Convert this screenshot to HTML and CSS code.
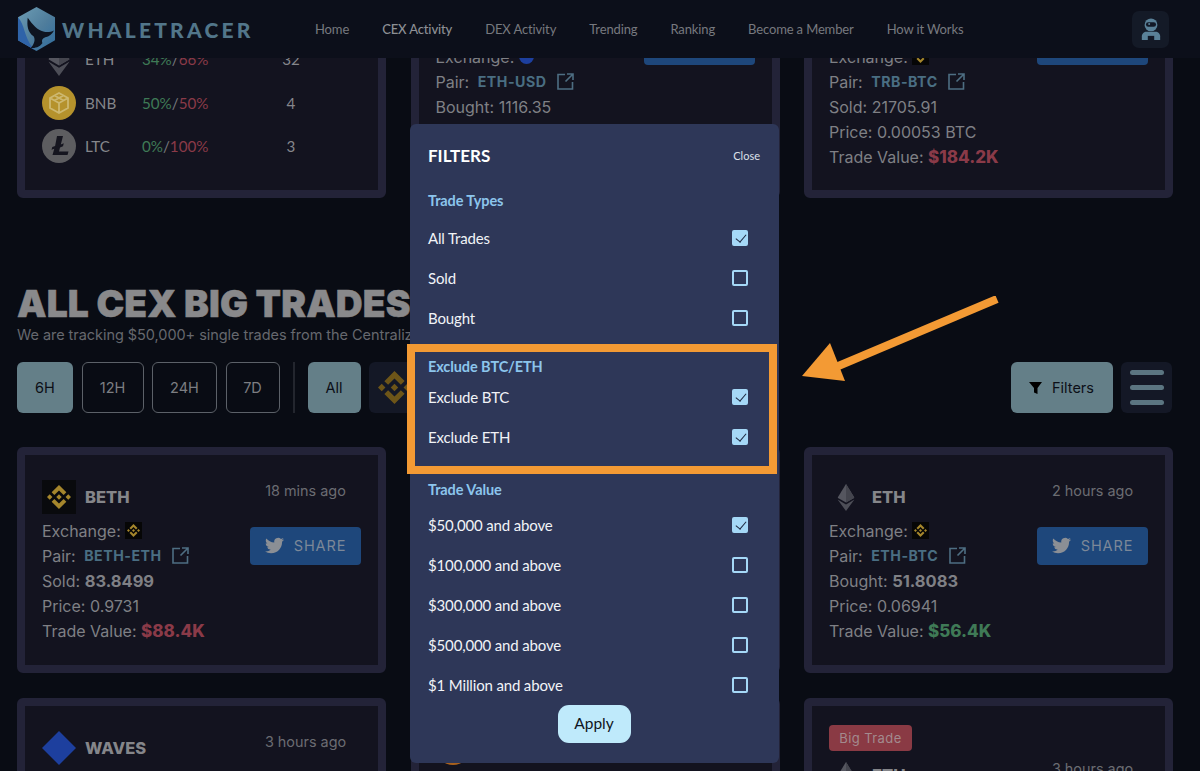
FILE: index.html
```html
<!DOCTYPE html>
<html>

<head>
  <meta name="viewport" content="width=device-width, initial-scale=1">
  <title>WhaleTracer</title>
  <link rel="stylesheet" href="styles.css">
</head>

<body>
  <svg class="defs" width="0" height="0">
    <symbol id="binance" viewBox="0 0 24 24">
      <path d="M16.624 13.9202l2.7175 2.7154-7.353 7.353-7.353-7.352 2.7175-2.7164 4.6355 4.6595 4.6356-4.6595zm4.6366-4.6366L24 12l-2.7154 2.7164L18.5682 12l2.6924-2.7164zm-9.272.001l2.7163 2.6914-2.7164 2.7174v-.001L9.2721 12l2.7164-2.7154zm-9.2722-.001L5.4088 12l-2.6914 2.6924L0 12l2.7164-2.7164zM11.9885.0115l7.353 7.329-2.7174 2.7154-4.6356-4.6356-4.6355 4.6595-2.7174-2.7154 7.353-7.353z" />
    </symbol>
    <symbol id="twitter" viewBox="0 0 24 24">
      <path d="M23.953 4.57a10 10 0 01-2.825.775 4.958 4.958 0 002.163-2.723c-.951.555-2.005.959-3.127 1.184a4.92 4.92 0 00-8.384 4.482C7.69 8.095 4.067 6.13 1.64 3.162a4.822 4.822 0 00-.666 2.475c0 1.71.87 3.213 2.188 4.096a4.904 4.904 0 01-2.228-.616v.06a4.923 4.923 0 003.946 4.827 4.996 4.996 0 01-2.212.085 4.936 4.936 0 004.604 3.417 9.867 9.867 0 01-6.102 2.105c-.39 0-.779-.023-1.17-.067a13.995 13.995 0 007.557 2.209c9.053 0 13.998-7.496 13.998-13.985 0-.21 0-.42-.015-.63A9.935 9.935 0 0024 4.59z" />
    </symbol>
    <symbol id="external" viewBox="0 0 17 17">
      <path d="M8 1.500H1V16h14.500V9M8.500 8.500L15.500 1.500M10 1h6v6" fill="none" stroke="currentColor" stroke-width="1.600" />
    </symbol>
    <symbol id="eth" viewBox="0 0 20 32">
      <path d="M10 0L0 16.200 10 22l10-5.800z" fill="#55565f" />
      <path d="M10 0v22l10-5.800z" fill="#44454e" />
      <path d="M0 18.400L10 32l10-13.600L10 24.300z" fill="#4d4e57" />
    </symbol>
  </svg>

  <div class="page">
    <header class="topbar">
      <a class="logo">
        <svg class="logo-mark" viewBox="0 0 40 46">
          <defs>
            <linearGradient id="hex" x1="0" y1="0" x2="1" y2="1">
              <stop offset="0" stop-color="#6d9db4" />
              <stop offset="0.55" stop-color="#4f7d9c" />
              <stop offset="1" stop-color="#2e6c9e" />
            </linearGradient>
          </defs>
          <path d="M20 0L39 10.500V34L20 45 1 34V10.500z" fill="url(#hex)" />
          <path d="M1 10.500C8 18 7 30 16 42L20 45 8 38 1 34z" fill="#2f63a8" />
          <path d="M11 11c-1 8 0 15 6 19 2 3 1 8-3 12 5 0 9-1 12-5-1-3 0-5 3-6 4-1 7-3 9-7-4 2-8 2-11 1-6-1-11-7-16-14z" fill="#0e1420" />
        </svg>
        <span class="logo-text">WHALETRACER</span>
      </a>
      <nav class="nav">
        <a>Home</a>
        <a class="active">CEX Activity</a>
        <a>DEX Activity</a>
        <a>Trending</a>
        <a>Ranking</a>
        <a>Become a Member</a>
        <a>How it Works</a>
      </nav>
      <button class="avatar">
        <svg viewBox="0 0 24 24" width="22" height="24">
          <circle cx="12" cy="7.500" r="7" fill="#5a8198" />
          <rect x="6.500" y="4.500" width="11" height="5" rx="2.500" fill="#121826" />
          <circle cx="10" cy="6.500" r="1.100" fill="#5a8198" />
          <path d="M2 24v-4c0-3 2.500-5 5-5h10c2.500 0 5 2 5 5v4z" fill="#5a8198" />
          <rect x="8.500" y="19.500" width="7" height="4.500" fill="#121826" />
        </svg>
      </button>
    </header>

    <main class="content">
      <div class="top-row">
        <section class="card">
          <div class="coin-row">
            <svg class="coin" viewBox="0 0 20 32">
              <use href="#eth" />
            </svg>
            <span class="coin-name">ETH</span>
            <span class="coin-pct"><span class="green">34%</span>/<span class="red">66%</span></span>
            <span class="coin-count">32</span>
          </div>
          <div class="coin-row">
            <svg class="coin" viewBox="0 0 34 34">
              <circle cx="17" cy="17" r="17" fill="#b5922c" />
              <path d="M17 7l9 5v10l-9 5-9-5V12zM8 12l9 5 9-5M17 17v10M12.500 9.500l9 5M21.500 9.500l-9 5" fill="none" stroke="#cdb870" stroke-width="1.800" />
            </svg>
            <span class="coin-name">BNB</span>
            <span class="coin-pct"><span class="green">50%</span>/<span class="red">50%</span></span>
            <span class="coin-count">4</span>
          </div>
          <div class="coin-row">
            <svg class="coin" viewBox="0 0 34 34">
              <circle cx="17" cy="17" r="17" fill="#5d5d60" />
              <path d="M15 7h6l-2.200 8.500 3-1.200-.8 3-3 1.200-1 4h9.500l-1 3.500H10.500l1.800-6.300-2.800 1 .8-2.800 2.800-1z" fill="#15151f" />
            </svg>
            <span class="coin-name">LTC</span>
            <span class="coin-pct"><span class="green">0%</span>/<span class="red">100%</span></span>
            <span class="coin-count">3</span>
          </div>
        </section>

        <section class="card trade trade-raised trade-covered">
          <div class="trade-info">
            <div class="line">Exchange: <span class="dot"></span></div>
            <div class="line">Pair: <a class="pair">ETH-USD</a> <svg class="ext"><use href="#external" /></svg></div>
            <div class="line">Bought: 1116.35</div>
          </div>
          <div class="trade-side">
            <button class="share"><svg class="bird"><use href="#twitter" /></svg>SHARE</button>
          </div>
        </section>

        <section class="card trade trade-raised">
          <div class="trade-info">
            <div class="line">Exchange: <span class="ex-icon"><svg><use href="#binance" /></svg></span></div>
            <div class="line">Pair: <a class="pair">TRB-BTC</a> <svg class="ext"><use href="#external" /></svg></div>
            <div class="line">Sold: 21705.91</div>
            <div class="line">Price: 0.00053 BTC</div>
            <div class="line">Trade Value: <b class="red value">$184.2K</b></div>
          </div>
          <div class="trade-side">
            <button class="share"><svg class="bird"><use href="#twitter" /></svg>SHARE</button>
          </div>
        </section>
      </div>

      <h1 class="title">ALL CEX BIG TRADES</h1>
      <p class="subtitle">We are tracking $50,000+ single trades from the Centralized Exchanges</p>

      <div class="toolbar">
        <button class="chip chip-on w-56">6H</button>
        <button class="chip w-62">12H</button>
        <button class="chip w-65">24H</button>
        <button class="chip w-54">7D</button>
        <span class="divider"></span>
        <button class="chip chip-on w-53">All</button>
        <button class="chip chip-dark"><svg class="chip-logo"><use href="#binance" /></svg></button>
        <button class="chip chip-on filters">
          <svg viewBox="0 0 14 14" width="14" height="14">
            <path d="M0 1h13L8.500 7v6L5 11.500V7z" />
          </svg>
          Filters
        </button>
        <button class="burger"><span></span><span></span><span></span></button>
      </div>

      <div class="card-grid">
        <section class="card">
          <div class="trade">
            <div class="trade-info">
              <div class="trade-head">
                <span class="head-icon"><svg><use href="#binance" /></svg></span>
                <span class="symbol">BETH</span>
              </div>
              <div class="line">Exchange: <span class="ex-icon"><svg><use href="#binance" /></svg></span></div>
              <div class="line">Pair: <a class="pair">BETH-ETH</a> <svg class="ext"><use href="#external" /></svg></div>
              <div class="line">Sold: <b>83.8499</b></div>
              <div class="line">Price: 0.9731</div>
              <div class="line">Trade Value: <b class="red value">$88.4K</b></div>
            </div>
            <div class="trade-side">
              <div class="time">18 mins ago</div>
              <button class="share"><svg class="bird"><use href="#twitter" /></svg>SHARE</button>
            </div>
          </div>
        </section>

        <section class="card"></section>

        <section class="card">
          <div class="trade">
            <div class="trade-info">
              <div class="trade-head">
                <svg class="head-coin" viewBox="0 0 20 32"><use href="#eth" /></svg>
                <span class="symbol">ETH</span>
              </div>
              <div class="line">Exchange: <span class="ex-icon"><svg><use href="#binance" /></svg></span></div>
              <div class="line">Pair: <a class="pair">ETH-BTC</a> <svg class="ext"><use href="#external" /></svg></div>
              <div class="line">Bought: <b>51.8083</b></div>
              <div class="line">Price: 0.06941</div>
              <div class="line">Trade Value: <b class="green value">$56.4K</b></div>
            </div>
            <div class="trade-side">
              <div class="time">2 hours ago</div>
              <button class="share"><svg class="bird"><use href="#twitter" /></svg>SHARE</button>
            </div>
          </div>
        </section>

        <section class="card">
          <div class="trade">
            <div class="trade-info">
              <div class="trade-head">
                <svg class="head-coin-full" viewBox="0 0 34 34">
                  <path d="M17 0l17 17-17 17L0 17z" fill="#1d3f9e" />
                </svg>
                <span class="symbol">WAVES</span>
              </div>
            </div>
            <div class="trade-side">
              <div class="time">3 hours ago</div>
            </div>
          </div>
        </section>

        <section class="card">
          <div class="trade">
            <div class="trade-info">
              <div class="trade-head">
                <span class="orange-coin"></span>
              </div>
            </div>
          </div>
        </section>

        <section class="card card-big">
          <span class="badge">Big Trade</span>
          <div class="trade">
            <div class="trade-info">
              <div class="trade-head">
                <svg class="head-coin" viewBox="0 0 20 32"><use href="#eth" /></svg>
                <span class="symbol">ETH</span>
              </div>
            </div>
            <div class="trade-side">
              <div class="time">3 hours ago</div>
            </div>
          </div>
        </section>
      </div>
    </main>

    <aside class="modal">
      <div class="modal-head">
        <h2>FILTERS</h2>
        <a class="close">Close</a>
      </div>

      <h3 class="group group-types">Trade Types</h3>
      <label class="row">All Trades <span class="check on"></span></label>
      <label class="row">Sold <span class="check"></span></label>
      <label class="row">Bought <span class="check"></span></label>

      <h3 class="group group-exclude">Exclude BTC/ETH</h3>
      <label class="row">Exclude BTC <span class="check on"></span></label>
      <label class="row">Exclude ETH <span class="check on"></span></label>

      <h3 class="group group-value">Trade Value</h3>
      <label class="row">$50,000 and above <span class="check on"></span></label>
      <label class="row">$100,000 and above <span class="check"></span></label>
      <label class="row">$300,000 and above <span class="check"></span></label>
      <label class="row">$500,000 and above <span class="check"></span></label>
      <label class="row">$1 Million and above <span class="check"></span></label>

      <button class="apply">Apply</button>
    </aside>

    <!-- annotation drawn over the screenshot -->
    <div class="highlight"></div>
    <svg class="arrow" viewBox="0 0 210 90" width="210" height="90">
      <path d="M197 3L36 71" stroke="#f39a34" stroke-width="8" fill="none" />
      <path d="M2 80L30 47 45 85z" fill="#f39a34" />
    </svg>
  </div>
</body>

</html>
```

FILE: styles.css
```css
* {
  box-sizing: border-box;
}

body {
  margin: 0;
  background-color: #090c14;
  font-family: "Inter", "Liberation Sans", sans-serif;
  color: #7f8085;
}

button {
  font-family: inherit;
  border: 0;
  padding: 0;
}

.defs {
  position: absolute;
}

.page {
  position: relative;
  height: 771px;
  overflow: hidden;
}

/* top bar */

.topbar {
  position: absolute;
  z-index: 2;
  top: 0;
  left: 0;
  width: 100%;
  height: 58px;
  display: flex;
  align-items: center;
  padding: 0 31px 0 17px;
  background-color: #0c0f1a;
  font-family: "Lato", sans-serif;
}

.logo {
  display: flex;
  align-items: center;
  gap: 6px;
  width: 298px;
}

.logo-mark {
  width: 39px;
  height: 45px;
}

.logo-text {
  font-size: 21px;
  font-weight: 900;
  letter-spacing: 3.2px;
  color: #52768a;
}

.nav {
  display: flex;
  gap: 33px;
  font-size: 13px;
  letter-spacing: -0.13px;
  color: #77797f;
}

.nav .active {
  color: #8d8f95;
  font-weight: 500;
}

.avatar {
  margin-left: auto;
  width: 37px;
  height: 37px;
  border-radius: 7px;
  background-color: #141a27;
  display: flex;
  align-items: center;
  justify-content: center;
}

/* page content */

.content {
  padding: 0 27px 0 17px;
}

.top-row {
  display: grid;
  grid-template-columns: repeat(3, 369px);
  grid-template-rows: 198px;
  gap: 24.500px;
  height: 198px;
  align-items: end;
  overflow: hidden;
}

.card {
  border: 8px solid #232338;
  border-radius: 6px;
  background-color: #13131f;
  padding: 25px 17px 22px;
}

.top-row .card {
  padding-bottom: 21px;
}

.coin-row {
  display: flex;
  align-items: center;
  height: 34px;
  margin-top: 9.500px;
  font-family: "Lato", sans-serif;
  font-size: 15.200px;
}

.coin-row:last-child {
  margin-bottom: 6px;
}

.coin {
  width: 34px;
  height: 34px;
  margin-right: 9px;
}

.coin-name {
  width: 57px;
  color: #85868b;
}

.coin-pct {
  width: 134px;
  color: #77787d;
}

.coin-count {
  width: 30px;
  text-align: center;
  color: #85868b;
}

.green {
  color: #3f7a56;
}

.red {
  color: #8a3a48;
}

/* section title and filter row */

.title {
  margin: 88px 0 0;
  font-size: 37.200px;
  line-height: 36px;
  font-weight: 900;
  letter-spacing: 0.1px;
  -webkit-text-stroke: 0.5px #89898b;
  color: #89898b;
  white-space: nowrap;
}

.subtitle {
  margin: 4px 0 0;
  font-size: 14.500px;
  line-height: 18px;
  letter-spacing: -0.05px;
  color: #66686e;
  white-space: nowrap;
}

.toolbar {
  display: flex;
  align-items: center;
  gap: 8.500px;
  margin: 18px 1px 0 0;
  height: 51px;
}

.chip {
  height: 51px;
  border-radius: 6px;
  border: 1px solid #5c6168;
  background-color: transparent;
  color: #7c7e82;
  font-size: 14.500px;
}

.chip-on {
  border: 0;
  background-color: #647f88;
  color: #0c0f17;
}

.chip-dark {
  width: 60px;
  border: 0;
  background-color: #141826;
  padding-left: 9px;
  text-align: left;
}

.chip-logo {
  display: block;
  width: 33px;
  height: 33px;
  fill: #6d5518;
}

.w-56 {
  width: 56px;
}

.w-62 {
  width: 62px;
}

.w-65 {
  width: 65px;
}

.w-54 {
  width: 54px;
}

.w-53 {
  width: 53px;
}

.divider {
  width: 2px;
  height: 51px;
  margin: 0 4.500px;
  background-color: #23262e;
}

.filters {
  margin-left: auto;
  width: 102px;
  display: flex;
  align-items: center;
  justify-content: center;
  gap: 9px;
}

.burger {
  width: 51px;
  height: 51px;
  border-radius: 6px;
  background-color: #141826;
  display: flex;
  flex-direction: column;
  justify-content: space-between;
  align-items: center;
  padding: 8px 0;
}

.burger span {
  width: 34px;
  height: 5px;
  border-radius: 3px;
  background-color: #5b7581;
}

.card-grid {
  display: grid;
  grid-template-columns: repeat(3, 369px);
  gap: 25px 24.500px;
  margin-top: 34px;
}

.card-grid .card {
  min-height: 226px;
}

.card-grid .card-big {
  padding-top: 19px;
}

.badge {
  display: block;
  width: 83px;
  height: 26px;
  margin-bottom: 7px;
  border-radius: 4px;
  background-color: #8a3a44;
  color: #a38a8e;
  font-size: 13px;
  line-height: 26px;
  letter-spacing: 0.4px;
  text-align: center;
}

/* trade cards */

.trade {
  display: flex;
  justify-content: space-between;
}

.trade-info {
  flex: 1;
}

.trade-side {
  width: 111px;
  text-align: center;
  flex-shrink: 0;
}

.trade-head {
  display: flex;
  align-items: center;
  height: 34px;
  margin-bottom: 4px;
}

.head-icon {
  width: 34px;
  height: 34px;
  background-color: #090a0d;
  margin-right: 9px;
  display: flex;
  align-items: center;
  justify-content: center;
}

.head-icon svg {
  width: 24px;
  height: 24px;
  fill: #a5862c;
}

.head-coin {
  width: 34px;
  height: 27px;
  margin-right: 9px;
}

.head-coin-full {
  width: 34px;
  height: 34px;
  margin-right: 9px;
}

.orange-coin {
  width: 34px;
  height: 34px;
  border-radius: 50%;
  background-color: #a9611d;
}

.symbol {
  font-size: 16.500px;
  font-weight: 800;
  color: #85868a;
}

.line {
  display: flex;
  align-items: center;
  height: 25px;
  gap: 4.500px;
  font-size: 16px;
  white-space: nowrap;
}

.line b {
  font-size: 16.500px;
  font-weight: 700;
}

.line .value {
  font-size: 17px;
  font-weight: 800;
}

.ex-icon {
  width: 17px;
  height: 17px;
  background-color: #060606;
  display: flex;
  align-items: center;
  justify-content: center;
}

.ex-icon svg {
  width: 13px;
  height: 13px;
  fill: #a5862c;
}

.dot {
  width: 15px;
  height: 15px;
  border-radius: 50%;
  background-color: #1d3f9e;
}

.pair {
  margin-left: 4px;
  font-size: 14.200px;
  font-weight: 700;
  letter-spacing: 0.5px;
  color: #4a6e82;
}

.ext {
  width: 17px;
  height: 17px;
  margin-left: 6px;
  color: #4e6e82;
}

.time {
  height: 22px;
  margin: 0 0 25px;
  font-size: 14.400px;
  line-height: 22px;
  color: #6b6c72;
  white-space: nowrap;
}

.share {
  width: 111px;
  height: 38px;
  padding-bottom: 2px;
  border-radius: 4px;
  background-color: #1e477b;
  color: #7c8898;
  font-size: 14.500px;
  letter-spacing: 0.9px;
  display: flex;
  align-items: center;
  justify-content: center;
  gap: 10px;
}

.bird {
  width: 19px;
  height: 19px;
  fill: #8b8f95;
}

.top-row .trade-covered {
  padding-bottom: 71px;
}

.trade-raised .trade-side {
  margin-top: -17px;
}

/* filter modal */

.modal {
  position: absolute;
  z-index: 3;
  top: 124px;
  left: 409.500px;
  width: 369.500px;
  height: 639px;
  padding: 19px 31px 0 18.500px;
  border-radius: 6px;
  background-color: #2e3758;
  font-family: "Lato", sans-serif;
  color: #f1f3f7;
}

.modal-head {
  display: flex;
  justify-content: space-between;
  align-items: center;
  height: 25px;
  margin-right: -12px;
}

.modal-head h2 {
  margin: 0;
  font-size: 17px;
  font-weight: 700;
  color: #fff;
}

.close {
  font-size: 11px;
  color: #dde0e8;
}

.group {
  margin: 0;
  font-size: 14.500px;
  line-height: 20px;
  font-weight: 700;
  letter-spacing: -0.1px;
  color: #8cc5ec;
}

.group-types {
  margin-top: 23px;
  margin-bottom: 7px;
}

.group-exclude {
  margin-top: 19px;
  margin-bottom: 0;
}

.group-value {
  margin-top: 23px;
  margin-bottom: 5px;
}

.row {
  display: flex;
  justify-content: space-between;
  align-items: center;
  height: 40px;
  font-size: 15px;
  letter-spacing: -0.15px;
}

.check {
  position: relative;
  width: 16px;
  height: 16px;
  border: 2px solid #a5d8f7;
  border-radius: 2px;
}

.check.on {
  background-color: #a5d8f7;
}

.check.on::after {
  content: "";
  position: absolute;
  left: 3.500px;
  top: 0;
  width: 5px;
  height: 9px;
  border-right: 1.800px solid #1c2740;
  border-bottom: 1.800px solid #1c2740;
  transform: rotate(40deg);
}

.apply {
  display: block;
  width: 73px;
  height: 38px;
  margin: 0 0 0 129.500px;
  padding-bottom: 3px;
  border-radius: 11px;
  background-color: #bfeafb;
  color: #101521;
  font-family: inherit;
  font-size: 15.500px;
}

/* annotation */

.highlight {
  position: absolute;
  z-index: 4;
  left: 407px;
  top: 344px;
  width: 370px;
  height: 130px;
  border: 8px solid #f39a34;
}

.arrow {
  position: absolute;
  z-index: 4;
  left: 800px;
  top: 296px;
}
```
